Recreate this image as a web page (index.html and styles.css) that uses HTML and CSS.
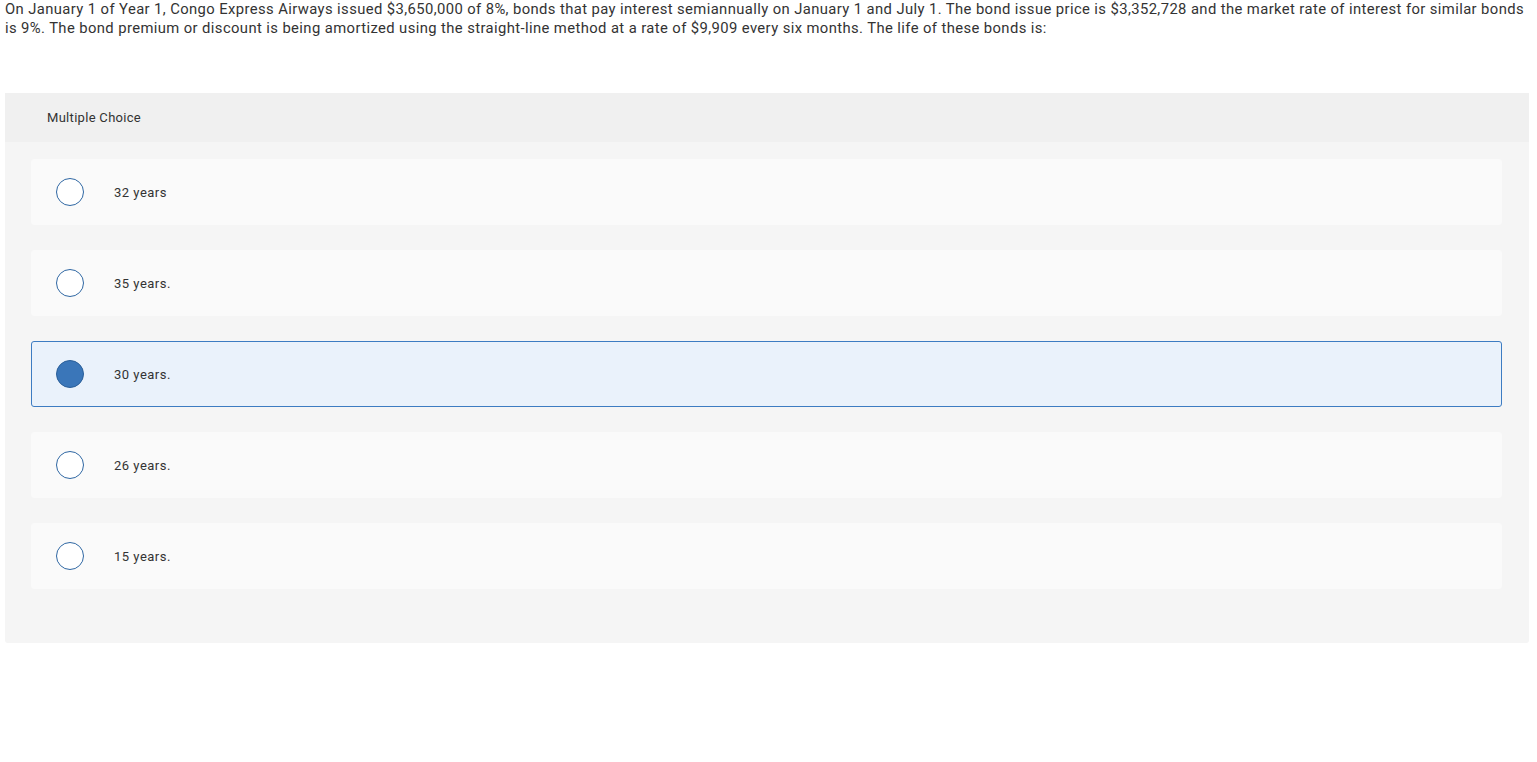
FILE: index.html
```html
<!DOCTYPE html>
<html>
<head>
<meta charset="utf-8">
<link rel="stylesheet" href="styles.css">
</head>
<body>
<p class="question">On January 1 of Year 1, Congo Express Airways issued $3,650,000 of 8%, bonds that pay interest semiannually on January 1 and July 1. The bond issue price is $3,352,728 and the market rate of interest for similar bonds is 9%. The bond premium or discount is being amortized using the straight-line method at a rate of $9,909 every six months. The life of these bonds is:</p>
<div class="mc">
  <div class="mc-head">Multiple Choice</div>
  <div class="mc-body">
    <div class="opt"><span class="radio"></span><span class="label">32 years</span></div>
    <div class="opt"><span class="radio"></span><span class="label">35 years.</span></div>
    <div class="opt selected"><span class="radio"></span><span class="label">30 years.</span></div>
    <div class="opt"><span class="radio"></span><span class="label">26 years.</span></div>
    <div class="opt"><span class="radio"></span><span class="label">15 years.</span></div>
  </div>
</div>
</body>
</html>
```
FILE: styles.css
```css
html, body { margin: 0; padding: 0; background: #fff; }
body { font-family: Roboto, "Liberation Sans", sans-serif; color: #333; }
.question {
  margin: 0;
  padding: 0 5px;
  font-size: 14.8px;
  letter-spacing: 0.4px;
  line-height: 19px;
  color: #333;
}
.mc {
  margin: 55px 8px 0 5px;
  background: #f5f5f5;
  border-radius: 0 0 3px 3px;
}
.mc-head {
  background: #f0f0f0;
  height: 49px;
  padding-left: 42px;
  display: flex;
  align-items: center;
  font-size: 13px;
  letter-spacing: 0.3px;
  color: #333;
}
.mc-body {
  padding: 17px 27px 54px 26px;
  display: flex;
  flex-direction: column;
  gap: 25px;
}
.opt {
  height: 66px;
  box-sizing: border-box;
  background: #fafafa;
  border: 1px solid #fafafa;
  border-radius: 3px;
  display: flex;
  align-items: center;
  padding-left: 24px;
}
.opt.selected {
  background: #eaf2fb;
  border-color: #3d7cc2;
}
.radio {
  width: 26px;
  height: 26px;
  border: 1px solid #2f67a3;
  border-radius: 50%;
  background: #fff;
  flex: none;
}
.selected .radio {
  background: #3a76b9;
  border-color: #2a5f99;
}
.label {
  margin-left: 30px;
  font-size: 13px;
  letter-spacing: 0.5px;
  color: #333;
}
```
